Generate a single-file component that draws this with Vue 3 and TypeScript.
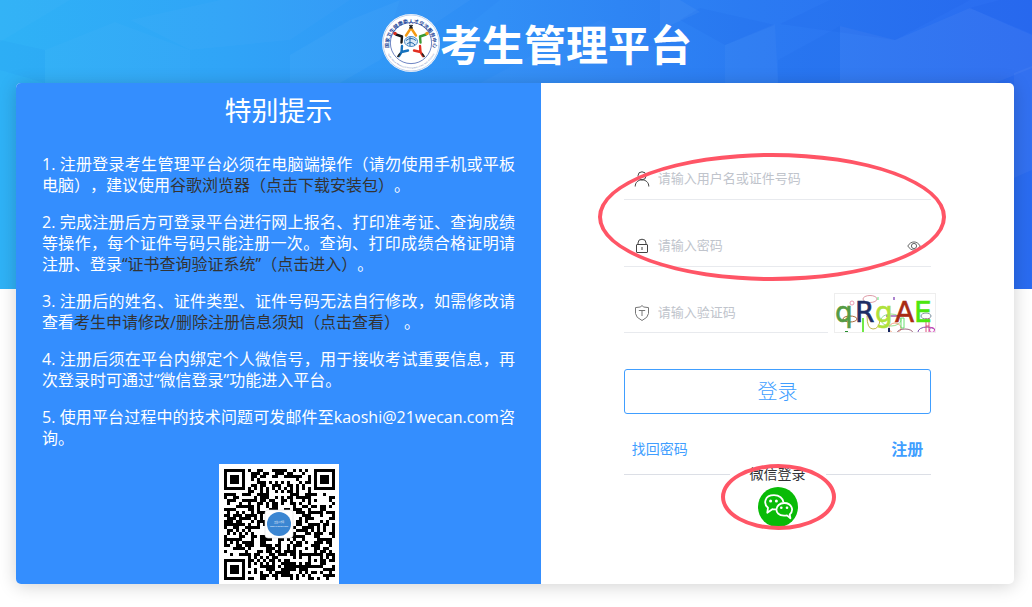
<script setup lang="ts">
import { ref } from 'vue'

const account = ref('')
const password = ref('')
const captcha = ref('')
const showPassword = ref(false)

const QR_SIZE = 37

function finderCell(x: number, y: number): boolean | null {
  const origins = [[0, 0], [QR_SIZE - 7, 0], [0, QR_SIZE - 7]]
  for (const [ox, oy] of origins) {
    const dx = x - ox
    const dy = y - oy
    if (dx < -1 || dx > 7 || dy < -1 || dy > 7) continue
    const ring = Math.max(Math.abs(dx - 3), Math.abs(dy - 3))
    return ring === 3 || ring <= 1
  }
  return null
}

function dataCell(x: number, y: number): boolean {
  let h = Math.imul(x + 1, 374761393) ^ Math.imul(y + 1, 668265263)
  h = Math.imul(h ^ (h >>> 13), 1274126177)
  h ^= h >>> 16
  return (h >>> 0) % 100 < 52
}

function buildQrPath(): string {
  let path = ''
  for (let y = 0; y < QR_SIZE; y++) {
    for (let x = 0; x < QR_SIZE; x++) {
      const finder = finderCell(x, y)
      const align = Math.max(Math.abs(x - 30), Math.abs(y - 30))
      let dark = dataCell(x, y)
      if (finder !== null) dark = finder
      else if (align <= 2) dark = align !== 1
      else if (x === 6 || y === 6) dark = (x + y) % 2 === 0
      if (dark) path += `M${x} ${y}h1v1h-1z`
    }
  }
  return path
}

const qrPath = buildQrPath()
</script>

<template>
  <div class="page">
    <svg class="backdrop" viewBox="0 0 1032 289" preserveAspectRatio="none" aria-hidden="true">
      <defs>
        <linearGradient id="sky" x1="0" y1="0" x2="1" y2="0">
          <stop offset="0" stop-color="#2fb2f6" />
          <stop offset="0.22" stop-color="#30a4f7" />
          <stop offset="0.48" stop-color="#318ff6" />
          <stop offset="0.72" stop-color="#2b7bf2" />
          <stop offset="1" stop-color="#2a6bf0" />
        </linearGradient>
      </defs>
      <rect width="1032" height="289" fill="url(#sky)" />
      <g fill="#fff">
        <path d="M0 0H70L0 42Z" opacity=".02" />
        <path d="M45 50L115 22L190 50V83H45Z" opacity=".02" />
        <path d="M130 20L220 0H350L290 40L190 50Z" opacity=".02" />
        <path d="M290 55L350 20L400 0H470L380 60L340 83H290Z" opacity=".03" />
        <path d="M480 83L560 40L600 20L660 50V83Z" opacity=".02" />
        <path d="M660 0H680L700 12L660 30Z" opacity=".04" />
        <path d="M725 45L775 24L778 83H725Z" opacity=".03" />
        <path d="M840 26L895 40L970 8L1032 35V68L995 83H840Z" opacity=".04" />
        <path d="M1014 73L1032 66V170L1014 178Z" opacity=".04" />
      </g>
      <g fill="#0648d8">
        <path d="M0 40L45 50V83L0 70Z" opacity=".03" />
        <path d="M400 0L500 0L450 40L380 60Z" opacity=".03" />
        <path d="M700 8L775 25L725 45L680 20Z" opacity=".06" />
        <path d="M780 24L830 0H970L895 40Z" opacity=".06" />
        <path d="M778 60L840 26V83H778Z" opacity=".05" />
        <path d="M970 8L1000 0H1032V34Z" opacity=".06" />
      </g>
    </svg>

    <header class="header">
      <svg class="emblem" viewBox="0 0 58 58" role="img" aria-label="徽标">
        <defs>
          <path id="ring-top" d="M8.2 38A22 22 0 1 1 49.8 38" />
          <path id="ring-bottom" d="M3.4 33A26 26 0 0 0 54.6 33" />
        </defs>
        <circle cx="29" cy="29" r="29" fill="#fff" />
        <circle cx="29" cy="29" r="28" fill="none" stroke="#9eb5dd" stroke-width="0.6" />
        <circle cx="29" cy="29" r="20.6" fill="#fff" stroke="#4a66b4" stroke-width="0.8" />
        <text class="ring-cn"><textPath href="#ring-top" startOffset="50%" text-anchor="middle">国家卫生健康委人才交流服务中心</textPath></text>
        <text class="ring-en"><textPath href="#ring-bottom" startOffset="50%" text-anchor="middle">Health Human Resources Development Center, NHC, P.R.China</textPath></text>
        <g fill="none" stroke-width="2.4" stroke-linecap="round" stroke-linejoin="round">
          <path d="M24 21.5L29 14L34 21.5" stroke="#f39a12" />
          <path d="M14 20.5L20 22.5M20 22.5L19.5 28.5" stroke="#181818" />
          <path d="M44 20.5L38 22.5M38 22.5L38.5 28.5" stroke="#3a9a35" />
          <path d="M20 32L19.5 38L26 36.5M19.5 38L17 42" stroke="#1672bd" />
          <path d="M38 32L38.5 38L32 36.5M38.5 38L41 42" stroke="#e23022" />
        </g>
        <circle cx="13" cy="19.5" r="1.8" fill="#d42c1d" />
        <circle cx="45" cy="19.5" r="1.8" fill="#ee9b18" />
        <path d="M15.5 43L18 39.5M42.5 43L40 39.5M27.5 11L30.5 14.5M30.5 11L27.5 14.5" stroke="#252525" stroke-width="1.6" />
        <ellipse cx="29" cy="27.5" rx="6.5" ry="5" fill="#d9eaf8" stroke="#377dbf" stroke-width="0.9" />
        <path d="M24 26.5Q29 22.5 34 26.5M25 30Q29 26.5 33 31M28 23V32" fill="none" stroke="#2468aa" stroke-width="1" />
      </svg>
      <h1>考生管理平台</h1>
    </header>

    <main class="card">
      <section class="notice">
        <h2>特别提示</h2>
        <div class="rules">
          <p>1. 注册登录考生管理平台必须在电脑端操作（请勿使用手机或平板电脑），建议使用<a href="#chrome">谷歌浏览器（点击下载安装包）</a>。</p>
          <p>2. 完成注册后方可登录平台进行网上报名、打印准考证、查询成绩等操作，每个证件号码只能注册一次。查询、打印成绩合格证明请注册、登录<a href="#verify">“证书查询验证系统”（点击进入）</a>。</p>
          <p>3. 注册后的姓名、证件类型、证件号码无法自行修改，如需修改请查看<a href="#guide">考生申请修改/删除注册信息须知（点击查看）</a> 。</p>
          <p>4. 注册后须在平台内绑定个人微信号，用于接收考试重要信息，再次登录时可通过“微信登录”功能进入平台。</p>
          <p>5. 使用平台过程中的技术问题可发邮件至kaoshi@21wecan.com咨询。</p>
        </div>
        <svg class="qr" viewBox="0 0 120 120" role="img" aria-label="二维码">
          <rect width="120" height="120" fill="#fff" />
          <path :d="qrPath" transform="translate(5 5) scale(3)" fill="#000" shape-rendering="crispEdges" />
          <rect x="46" y="46" width="28" height="28" rx="3" fill="#fff" stroke="#ddd" stroke-width="0.6" />
          <circle cx="60" cy="60" r="12" fill="#3b86d2" />
          <text class="qr-label" x="60" y="59">卫生人才网</text>
          <text class="qr-label" x="60" y="63">www.21wecan.com</text>
        </svg>
      </section>

      <section class="login">
        <form class="form" @submit.prevent>
          <div class="field">
            <svg class="icon" viewBox="0 0 16 16" aria-hidden="true">
              <circle cx="8" cy="4.8" r="4" />
              <path d="M1.2 15.5C1.2 11.5 4 8.9 8 8.9S14.8 11.5 14.8 15.5" />
            </svg>
            <input v-model="account" type="text" aria-label="用户名或证件号码" placeholder="请输入用户名或证件号码" />
          </div>
          <div class="field">
            <svg class="icon" viewBox="0 0 16 16" aria-hidden="true">
              <rect x="2.5" y="6.5" width="11" height="8" rx="0.5" />
              <path d="M4 6.5V5A4 3.8 0 0 1 12 5V6.5M8 9V12" />
            </svg>
            <input v-model="password" :type="showPassword ? 'text' : 'password'" aria-label="密码" placeholder="请输入密码" />
            <button class="eye" type="button" aria-label="显示密码" @click="showPassword = !showPassword">
              <svg viewBox="0 0 14 14" aria-hidden="true">
                <path d="M0.8 7C4 1.6 10 1.6 13.2 7C10 12.4 4 12.4 0.8 7Z" />
                <circle cx="7" cy="7" r="2.6" />
              </svg>
            </button>
          </div>
          <div class="captcha-row">
            <div class="field captcha-field">
              <svg class="icon shield" viewBox="0 0 16 16" aria-hidden="true">
                <path d="M8 0.6L9.8 2L14.5 2.6V8.5Q14.2 12.6 8 15.5Q1.8 12.6 1.5 8.5V2.6L6.2 2Z" />
                <path d="M4.8 5.5H11.2M8 5.5V11" />
              </svg>
              <input v-model="captcha" type="text" aria-label="验证码" placeholder="请输入验证码" />
            </div>
            <button class="captcha" type="button" aria-label="刷新验证码">
              <svg viewBox="0 0 100 38" aria-hidden="true">
                <g fill="none" stroke-width="0.9">
                  <ellipse cx="35" cy="5" rx="7" ry="3.5" stroke="#d9909c" />
                  <ellipse cx="17" cy="9" rx="2" ry="2" stroke="#e58eaa" />
                  <ellipse cx="15" cy="25" rx="7" ry="3" stroke="#a05b27" />
                  <path d="M32 22Q32 35 38 35T45 26" stroke="#b5ad35" />
                  <ellipse cx="56" cy="26" rx="10" ry="6" stroke="#8ddd83" />
                  <ellipse cx="60" cy="34" rx="6" ry="5" stroke="#ef9a75" />
                  <path d="M51 22H64" stroke="#8640a5" stroke-width="1.2" />
                  <path d="M66 24H69V34H66Z" stroke="#56dc61" />
                  <ellipse cx="70" cy="39" rx="8" ry="4" stroke="#91556f" />
                  <ellipse cx="91" cy="22" rx="5" ry="3" stroke="#718797" />
                  <ellipse cx="92" cy="38" rx="9" ry="5" stroke="#6e39a4" />
                  <path d="M91 24V38M94 24V38M91 32H94" stroke="#d94070" />
                  <circle cx="97" cy="36" r="2.5" stroke="#cf38b4" />
                  <path d="M43 3V6" stroke="#53e56f" />
                  <path d="M59 3V6" stroke="#8041b6" stroke-width="1.3" />
                  <path d="M28 24V38" stroke="#4ce416" stroke-width="1.6" />
                  <path d="M54 34V38" stroke="#17255f" stroke-width="2" />
                  <path d="M10 38H13" stroke="#258c2c" stroke-width="2" />
                </g>
                <g class="captcha-glyphs">
                  <text x="0" y="28" fill="#559b43" stroke="#559b43">q</text>
                  <text x="20" y="28" fill="#1d2d65" stroke="#1d2d65">R</text>
                  <text x="40" y="28" fill="#afe23a" stroke="#afe23a">g</text>
                  <text x="60" y="28" fill="#a92b13" stroke="#a92b13">A</text>
                  <text x="79" y="28" fill="#4ce610" stroke="#4ce610">E</text>
                </g>
              </svg>
            </button>
          </div>
          <span class="mark mark-fields" aria-hidden="true"></span>

          <button class="submit" type="submit">登录</button>
          <nav class="links">
            <a href="#recover">找回密码</a>
            <a class="register" href="#register">注册</a>
          </nav>
          <div class="wechat">
            <div class="divider"><span>微信登录</span></div>
            <button class="wechat-button" type="button" aria-label="微信登录">
              <svg viewBox="0 0 40 40" aria-hidden="true">
                <circle cx="20" cy="20" r="20" fill="#09bb07" />
                <g fill="none" stroke="#fff" stroke-width="1.8" stroke-linejoin="round">
                  <path d="M18 22.3C17 22.5 15.5 22.5 14.3 22.2L9.3 25.7L10 20.7C5.2 16.7 6.4 8.2 16 8.2C21.4 8.2 25 11.3 25.4 15.1" />
                  <path d="M31.7 27.5C36.4 23.3 33.6 16 26.3 16C16.5 16 15.3 28.5 26 28.7Q27.6 28.8 29 28.4L32.4 31.2Z" />
                </g>
                <g fill="#fff">
                  <circle cx="12.6" cy="14" r="1.5" /><circle cx="18.4" cy="14" r="1.5" />
                  <circle cx="23.3" cy="20.8" r="1.3" /><circle cx="29" cy="20.8" r="1.3" />
                </g>
              </svg>
            </button>
            <span class="mark mark-wechat" aria-hidden="true"></span>
          </div>
        </form>
      </section>
    </main>
  </div>
</template>

<style>
body {
  background: #fff;
}
</style>

<style scoped>
* {
  box-sizing: border-box;
}

.page {
  position: relative;
  padding: 0 18px 23px 16px;
  font-family: "Open Sans", "Noto Sans CJK SC", sans-serif;
  text-spacing-trim: space-all;
}

.backdrop {
  position: absolute;
  top: 0;
  left: 0;
  width: 100%;
  height: 289px;
}

.header {
  position: relative;
  display: flex;
  align-items: center;
  justify-content: center;
  padding: 14px 0 11px 44px;
}

.emblem {
  width: 58px;
  height: 58px;
}

.ring-cn {
  font-family: "Noto Sans CJK SC", sans-serif;
  font-size: 5px;
  font-weight: 700;
  fill: #24479a;
}

.ring-en {
  font-family: "Liberation Sans", sans-serif;
  font-size: 2px;
  fill: #5873b4;
}

h1 {
  margin: 0;
  padding-top: 4px;
  font-size: 42px;
  font-weight: 700;
  line-height: 54px;
  color: #fff;
}

.card {
  position: relative;
  display: grid;
  grid-template-columns: 525fr 473fr;
  border-radius: 5px;
  overflow: hidden;
  background: #fff;
  box-shadow: 0 2px 18px rgba(0, 0, 0, 0.18);
}

.notice {
  display: flex;
  flex-direction: column;
  align-items: center;
  padding: 10px 26px 0;
  background: #348efe;
  color: #fff;
}

h2 {
  margin: 0 0 25px;
  font-size: 27px;
  font-weight: 400;
  line-height: 36px;
}

.rules {
  display: flex;
  flex-direction: column;
  gap: 16px;
  width: 100%;
  font-size: 16px;
  line-height: 21px;
  text-align: justify;
}

.rules p {
  margin: 0;
}

.rules a {
  color: #333;
  text-decoration: none;
}

.qr {
  width: 120px;
  height: 120px;
  margin-top: 15px;
}

.qr-label {
  font-size: 2px;
  fill: #fff;
  text-anchor: middle;
}

.login {
  padding-top: 76px;
}

.form {
  position: relative;
  width: 65%;
  margin: 0 auto;
}

.field {
  display: flex;
  align-items: center;
  height: 41px;
  margin-bottom: 26px;
  padding: 0 10px;
  border-bottom: 1px solid #e8eaee;
}

.icon {
  flex: none;
  width: 16px;
  height: 16px;
  margin-right: 8px;
  fill: none;
  stroke: #444;
  stroke-width: 1;
}

.shield {
  stroke: #777;
}

input {
  flex: 1;
  min-width: 0;
  height: 100%;
  padding: 0 0 2px;
  border: 0;
  outline: 0;
  background: transparent;
  font-family: inherit;
  font-size: 13px;
  color: #606266;
}

input::placeholder {
  color: #c0c4cc;
}

button {
  padding: 0;
  border: 0;
  background: none;
  font-family: inherit;
  cursor: pointer;
}

.eye,
.eye svg {
  display: block;
  width: 14px;
  height: 14px;
}

.eye svg {
  fill: none;
  stroke: #555;
  stroke-width: 0.9;
}

.captcha-row {
  display: flex;
  gap: 6px;
  height: 40px;
  margin: 0 -5px 36px 0;
}

.captcha-field {
  flex: 1;
  min-width: 0;
  height: 40px;
  margin: 0;
}

.captcha {
  flex: none;
  width: 102px;
  height: 40px;
  border: 1px solid #eee;
  overflow: hidden;
}

.captcha svg {
  display: block;
  width: 100%;
  height: 100%;
}

.captcha-glyphs {
  font-family: "DejaVu Sans", sans-serif;
  font-size: 28px;
  stroke-width: 0.6;
}

.submit {
  display: block;
  width: 100%;
  height: 45px;
  padding-bottom: 2px;
  border: 1px solid #409eff;
  border-radius: 3px;
  font-size: 20px;
  font-weight: 300;
  color: #409eff;
}

.links {
  display: flex;
  align-items: center;
  justify-content: space-between;
  padding: 23px 8px 5px;
  font-size: 14px;
  line-height: 24px;
}

.links a {
  color: #409eff;
  text-decoration: none;
}

.links .register {
  font-size: 16px;
  font-weight: 700;
}

.wechat {
  position: relative;
  display: flex;
  flex-direction: column;
  align-items: center;
  gap: 5px;
}

.divider {
  display: flex;
  align-items: center;
  gap: 20px;
  width: 100%;
  font-size: 14px;
  line-height: 16px;
  color: #303133;
}

.divider::before,
.divider::after {
  content: "";
  flex: 1;
  height: 1px;
  background: #dcdfe6;
}

.wechat-button,
.wechat-button svg {
  display: block;
  width: 40px;
  height: 40px;
}

.mark {
  position: absolute;
  border: 4px solid #ff5566;
  border-radius: 50%;
  pointer-events: none;
}

.mark-fields {
  top: -6px;
  left: -26px;
  right: -15px;
  height: 128px;
}

.mark-wechat {
  top: -2px;
  left: calc(50% - 57px);
  width: 115px;
  height: 66px;
}
</style>
